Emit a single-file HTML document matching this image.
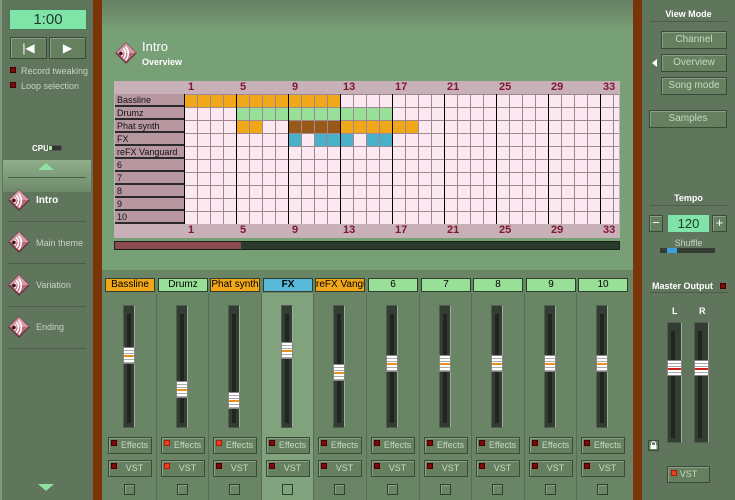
<!DOCTYPE html>
<html><head><meta charset="utf-8"><style>
*{box-sizing:border-box;margin:0;padding:0}
body{width:735px;height:500px;overflow:hidden;position:relative;background:#6f8f6c;font-family:"Liberation Sans",sans-serif;font-size:9px}
.a{position:absolute}
.btn{position:absolute;border:1px solid #3a4a38;box-shadow:inset 1px 1px 0 #8aa088;background:#66805f;color:#c8d8c4;text-align:center}
.pl{padding-left:9px}
.led{position:absolute;width:6px;height:6px;background:#800808;border:1px solid #400}
.led.on{background:#f04020;border-color:#a02010}
.sep{position:absolute;height:1px;background:#8aa088;border-bottom:1px solid #4a5e48}
.ico{position:absolute;width:22px;height:22px}
.lbl{position:absolute;height:14px;border:1px solid #2f3f2e;font-size:10px;text-align:center;line-height:12px;color:#000;overflow:hidden;white-space:nowrap}
.track{position:absolute;width:12px;background:#333d33;border:1px solid #4f5f4e;border-right-color:#9ab097}
.track i{position:absolute;left:3px;top:8px;bottom:4px;width:4px;background:#1e261e}
.knob{position:absolute;width:12px;height:17px;background:repeating-linear-gradient(180deg,#fff 0 2px,#aaa 2px 3px);border:1px solid #888}
.knob b{position:absolute;left:0;right:0;top:7px;height:2px;background:#e89020}
.chk{position:absolute;width:11px;height:11px;border:1px solid #2f3f2e;box-shadow:inset 1px 1px 0 #8aa088}
.num{position:absolute;font-size:11px;font-weight:bold;color:#801830}
</style></head><body>
<div class="a" style="left:0;top:0;width:93px;height:500px;background:#5f765c;border-left:2px solid #7e9a7a"></div>
<div class="a" style="left:93px;top:0;width:9px;height:500px;background:#7a3408"></div>
<div class="a" style="left:633px;top:0;width:9px;height:500px;background:#7a3408"></div>
<div class="a" style="left:642px;top:0;width:93px;height:500px;background:#5f765c"></div>
<div class="a" style="left:9px;top:9px;width:78px;height:21px;background:#80e4a8;border:1px solid #4a7a5a;font-size:15px;text-align:center;line-height:19px;color:#1a3a2a">1:00</div>
<div class="btn" style="left:10px;top:37px;width:37px;height:22px;font-size:12px;line-height:20px;color:#fff">|◀</div>
<div class="btn" style="left:49px;top:37px;width:37px;height:22px;font-size:12px;line-height:20px;color:#fff">▶</div>
<div class="led" style="left:10px;top:67px"></div><div class="a" style="left:21px;top:66px;color:#c8d4c4">Record tweaking</div>
<div class="led" style="left:10px;top:82px"></div><div class="a" style="left:21px;top:81px;color:#c8d4c4">Loop selection</div>
<div class="a" style="left:32px;top:144px;color:#fff;font-size:8px;font-weight:bold">CPU</div>
<div class="a" style="left:48px;top:145px;width:14px;height:6px;background:#333;border:1px solid #555"><div style="width:3px;height:4px;background:#9e9"></div></div>
<div class="a" style="left:3px;top:160px;width:88px;height:32px;background:linear-gradient(#8fae8a,#6f8a6b)"></div>
<div class="a" style="left:38px;top:163px;width:0;height:0;border:8px solid transparent;border-bottom:7px solid #90e0a0;border-top:0"></div>
<div class="a" style="left:38px;top:484px;width:0;height:0;border:8px solid transparent;border-top:7px solid #90e0a0;border-bottom:0"></div>
<div class="sep" style="left:8px;top:177px;width:78px"></div>
<div class="sep" style="left:8px;top:221px;width:78px"></div>
<div class="sep" style="left:8px;top:263px;width:78px"></div>
<div class="sep" style="left:8px;top:306px;width:78px"></div>
<div class="sep" style="left:8px;top:348px;width:78px"></div>
<svg width="0" height="0" style="position:absolute"><defs><g id="ic"><polygon points="12,1 23,12 12,23 1,12" fill="#b86878" stroke="#5a2030"/><polygon points="12,1 23,12 12,12 1,12" fill="#d898a8"/><path d="M7 9.5a4 4 0 0 1 0 6M9 7a7.5 7.5 0 0 1 0 11M11.5 5a11 11 0 0 1 0 15" stroke="#fff" stroke-width="1.8" fill="none"/><circle cx="6.5" cy="12.5" r="2" fill="#4a1020"/></g></defs></svg>
<svg class="ico" style="left:8px;top:189px" viewBox="0 0 24 24"><use href="#ic"/></svg>
<div class="a" style="left:36px;top:195px;color:#fff;font-weight:bold;font-size:10px">Intro</div>
<svg class="ico" style="left:8px;top:231px" viewBox="0 0 24 24"><use href="#ic"/></svg>
<div class="a" style="left:36px;top:238px;color:#c8d4c4">Main theme</div>
<svg class="ico" style="left:8px;top:274px" viewBox="0 0 24 24"><use href="#ic"/></svg>
<div class="a" style="left:36px;top:280px;color:#c8d4c4">Variation</div>
<svg class="ico" style="left:8px;top:316px" viewBox="0 0 24 24"><use href="#ic"/></svg>
<div class="a" style="left:36px;top:322px;color:#c8d4c4">Ending</div>
<div class="a" style="left:102px;top:0;width:531px;height:270px;background:linear-gradient(#667f63 0,#6f8d6c 14px,#78a077 30px,#78a077)"></div>
<svg class="ico" style="left:115px;top:42px" viewBox="0 0 24 24"><use href="#ic"/></svg>
<div class="a" style="left:142px;top:39px;color:#fff;font-size:13px">Intro</div>
<div class="a" style="left:142px;top:57px;color:#fff;font-size:9px;font-weight:bold">Overview</div>
<div class="a" style="left:114px;top:81px;width:506px;height:157px;background:#c8b0b8"></div>
<span class="num" style="left:188px;top:81px">1</span><span class="num" style="left:240px;top:81px">5</span><span class="num" style="left:292px;top:81px">9</span><span class="num" style="left:343px;top:81px">13</span><span class="num" style="left:395px;top:81px">17</span><span class="num" style="left:447px;top:81px">21</span><span class="num" style="left:499px;top:81px">25</span><span class="num" style="left:551px;top:81px">29</span><span class="num" style="left:603px;top:81px">33</span>
<span class="num" style="left:188px;top:224px">1</span><span class="num" style="left:240px;top:224px">5</span><span class="num" style="left:292px;top:224px">9</span><span class="num" style="left:343px;top:224px">13</span><span class="num" style="left:395px;top:224px">17</span><span class="num" style="left:447px;top:224px">21</span><span class="num" style="left:499px;top:224px">25</span><span class="num" style="left:551px;top:224px">29</span><span class="num" style="left:603px;top:224px">33</span>
<div class="a" style="left:115px;top:94px;width:69px;height:130px;background:repeating-linear-gradient(180deg,#b898a0 0 11px,#2a2a2a 11px 13px);font-size:9px;line-height:13px;color:#111;padding-left:2px">
<div>Bassline</div><div>Drumz</div><div>Phat synth</div><div>FX</div><div>reFX Vanguard</div><div>6</div><div>7</div><div>8</div><div>9</div><div>10</div></div>
<div class="a" style="left:184px;top:94px;width:435px;height:130px;background:#fce8f0;overflow:hidden">
<div class="a" style="left:0;top:0;width:156px;height:13px;background:#f0a818"></div>
<div class="a" style="left:52px;top:13px;width:156px;height:13px;background:#98e098"></div>
<div class="a" style="left:52px;top:26px;width:26px;height:13px;background:#f0a818"></div>
<div class="a" style="left:104px;top:26px;width:52px;height:13px;background:#985818"></div>
<div class="a" style="left:156px;top:26px;width:78px;height:13px;background:#f0a818"></div>
<div class="a" style="left:104px;top:39px;width:13px;height:13px;background:#48b0c8"></div>
<div class="a" style="left:130px;top:39px;width:39px;height:13px;background:#48b0c8"></div>
<div class="a" style="left:182px;top:39px;width:26px;height:13px;background:#48b0c8"></div>
<div class="a" style="left:0;top:0;width:435px;height:130px;background:repeating-linear-gradient(90deg,#000 0 1px,transparent 1px 52px),repeating-linear-gradient(90deg,#a08890 0 1px,transparent 1px 13px),repeating-linear-gradient(180deg,#a08890 0 1px,transparent 1px 13px)"></div>
</div>
<div class="a" style="left:114px;top:241px;width:506px;height:9px;background:#2a3a2c;border:1px solid #1a221a"><div style="width:126px;height:7px;background:#8a4a50"></div></div>
<div class="a" style="left:102px;top:270px;width:531px;height:230px;background:#6a8466"></div>
<div class="a" style="left:262px;top:293px;width:52px;height:207px;background:#80a27c"></div>
<div id="mx"></div>
<div class="a" style="left:642px;top:9px;width:93px;text-align:center;color:#fff;font-weight:bold">View Mode</div>
<div class="sep" style="left:650px;top:21px;width:78px"></div>
<div class="btn" style="left:661px;top:31px;width:66px;height:18px;line-height:16px;font-size:10px">Channel</div>
<div class="btn" style="left:661px;top:54px;width:66px;height:18px;line-height:16px;font-size:10px">Overview</div>
<div class="a" style="left:652px;top:59px;border:4px solid transparent;border-right:5px solid #fff;border-left:0"></div>
<div class="btn" style="left:661px;top:77px;width:66px;height:18px;line-height:16px;font-size:10px">Song mode</div>
<div class="btn" style="left:649px;top:110px;width:78px;height:18px;line-height:16px;font-size:10px">Samples</div>
<div class="a" style="left:642px;top:193px;width:93px;text-align:center;color:#fff;font-weight:bold">Tempo</div>
<div class="sep" style="left:650px;top:205px;width:78px"></div>
<div class="btn" style="left:649px;top:215px;width:14px;height:17px;color:#fff;font-size:13px;line-height:14px">−</div>
<div class="a" style="left:668px;top:215px;width:41px;height:17px;background:#80e4a8;text-align:center;font-size:13px;line-height:17px;color:#1a3a2a">120</div>
<div class="btn" style="left:712px;top:215px;width:15px;height:17px;color:#fff;font-size:13px;line-height:14px">+</div>
<div class="a" style="left:642px;top:238px;width:93px;text-align:center;color:#c8d4c4">Shuffle</div>
<div class="a" style="left:660px;top:248px;width:55px;height:5px;background:#333d33"><div style="margin-left:7px;width:10px;height:5px;background:#3aa0e0"></div></div>
<div class="a" style="left:652px;top:281px;color:#fff;font-weight:bold">Master Output</div>
<div class="led" style="left:720px;top:283px"></div>
<div class="sep" style="left:650px;top:292px;width:78px"></div>
<div class="a" style="left:672px;top:306px;color:#fff;font-weight:bold">L</div>
<div class="a" style="left:699px;top:306px;color:#fff;font-weight:bold">R</div>
<div class="track" style="left:667px;top:322px;height:121px;width:15px"><i></i></div>
<div class="knob" style="left:667px;top:360px;width:15px;height:16px"><b style="background:#d02020"></b></div>
<div class="track" style="left:694px;top:322px;height:121px;width:15px"><i></i></div>
<div class="knob" style="left:694px;top:360px;width:15px;height:16px"><b style="background:#d02020"></b></div>
<svg class="a" style="left:648px;top:440px" width="11" height="11" viewBox="0 0 11 11"><rect x="0.5" y="0.5" width="10" height="10" fill="#66805f" stroke="#3a4a38"/><path d="M3.5 5V3.5a2 2 0 0 1 4 0V5" stroke="#fff" fill="none"/><rect x="2.5" y="5" width="6" height="4" fill="#fff"/></svg>
<div class="btn" style="left:667px;top:466px;width:43px;height:17px;line-height:15px">VST</div>
<div class="led on" style="left:671px;top:470px"></div>
<script>
var names=["Bassline","Drumz","Phat synth","FX","reFX Vanguard","6","7","8","9","10"];
var cols=["#f0a818","#98e098","#f0a818","#58b8d8","#f0a818","#98e098","#98e098","#98e098","#98e098","#98e098"];
var ky=[347,381,392,342,364,355,355,355,355,355];
var ef=[0,1,1,0,0,0,0,0,0,0],vs=[0,1,0,0,0,0,0,0,0,0];
var h="";
for(var i=0;i<10;i++){var x=Math.round(104+i*52.6);
h+='<div class="lbl" style="left:'+(x+1)+'px;top:278px;width:50px;background:'+cols[i]+(i==3?';font-weight:bold':'')+'">'+names[i]+'</div>';
if(i>0)h+='<div class="a" style="left:'+(x-1)+'px;top:293px;width:1px;height:207px;background:#566e53"></div>';
h+='<div class="track" style="left:'+(x+19)+'px;top:305px;height:123px"><i></i></div>';
h+='<div class="knob" style="left:'+(x+19)+'px;top:'+ky[i]+'px"><b></b></div>';
h+='<div class="btn pl" style="left:'+(x+4)+'px;top:437px;width:44px;height:17px;line-height:15px">Effects</div><div class="led'+(ef[i]?' on':'')+'" style="left:'+(x+7)+'px;top:440px"></div>';
h+='<div class="btn pl" style="left:'+(x+4)+'px;top:460px;width:44px;height:17px;line-height:15px">VST</div><div class="led'+(vs[i]?' on':'')+'" style="left:'+(x+7)+'px;top:463px"></div>';
h+='<div class="chk" style="left:'+(x+20)+'px;top:484px"></div>';}
document.getElementById("mx").innerHTML=h;
</script>
</body></html>
